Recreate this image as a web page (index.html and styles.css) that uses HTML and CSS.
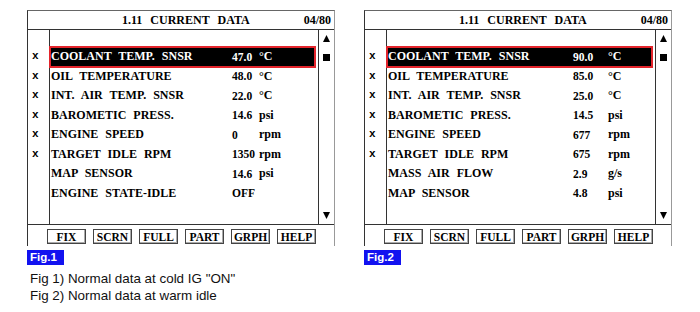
FILE: index.html
```html
<!DOCTYPE html>
<html lang="en">
<head>
    <meta charset="UTF-8">
    <title>Current Data - Normal Values</title>
    <link rel="stylesheet" href="styles.css">
</head>
<body>
    <div class="figures">
        <section class="panel">
            <div class="screen">
                <div class="screen-head">
                    <span class="title">1.11 CURRENT DATA</span>
                    <span class="page">04/80</span>
                </div>
                <div class="screen-body">
                    <div class="marks">
                        <span class="mark">x</span>
                        <span class="mark">x</span>
                        <span class="mark">x</span>
                        <span class="mark">x</span>
                        <span class="mark">x</span>
                        <span class="mark">x</span>
                    </div>
                    <ul class="data">
                        <li class="row row-selected"><span>COOLANT TEMP. SNSR</span><span class="val">47.0</span><span>°C</span></li>
                        <li class="row"><span>OIL TEMPERATURE</span><span class="val">48.0</span><span>°C</span></li>
                        <li class="row"><span>INT. AIR TEMP. SNSR</span><span class="val">22.0</span><span>°C</span></li>
                        <li class="row"><span>BAROMETIC PRESS.</span><span class="val">14.6</span><span>psi</span></li>
                        <li class="row"><span>ENGINE SPEED</span><span class="val">0</span><span>rpm</span></li>
                        <li class="row"><span>TARGET IDLE RPM</span><span class="val">1350</span><span>rpm</span></li>
                        <li class="row"><span>MAP SENSOR</span><span class="val">14.6</span><span>psi</span></li>
                        <li class="row"><span>ENGINE STATE-IDLE</span><span class="val">OFF</span><span></span></li>
                    </ul>
                    <div class="scroll">
                        <svg class="arrow-up" width="7" height="7" viewBox="0 0 7 7"><path d="M3.5 0 L7 7 L0 7 Z"/></svg>
                        <svg class="thumb" width="7" height="7" viewBox="0 0 7 7"><rect width="7" height="7"/></svg>
                        <svg class="arrow-down" width="7" height="7" viewBox="0 0 7 7"><path d="M0 0 L7 0 L3.5 7 Z"/></svg>
                    </div>
                </div>
                <div class="keys">
                    <span class="key">FIX</span>
                    <span class="key">SCRN</span>
                    <span class="key">FULL</span>
                    <span class="key">PART</span>
                    <span class="key">GRPH</span>
                    <span class="key">HELP</span>
                </div>
            </div>
            <div class="fig-tag">Fig.1</div>
        </section>

        <section class="panel panel-warm">
            <div class="screen">
                <div class="screen-head">
                    <span class="title">1.11 CURRENT DATA</span>
                    <span class="page">04/80</span>
                </div>
                <div class="screen-body">
                    <div class="marks">
                        <span class="mark">x</span>
                        <span class="mark">x</span>
                        <span class="mark">x</span>
                        <span class="mark">x</span>
                        <span class="mark">x</span>
                        <span class="mark">x</span>
                    </div>
                    <ul class="data">
                        <li class="row row-selected"><span>COOLANT TEMP. SNSR</span><span class="val">90.0</span><span>°C</span></li>
                        <li class="row"><span>OIL TEMPERATURE</span><span class="val">85.0</span><span>°C</span></li>
                        <li class="row"><span>INT. AIR TEMP. SNSR</span><span class="val">25.0</span><span>°C</span></li>
                        <li class="row"><span>BAROMETIC PRESS.</span><span class="val">14.5</span><span>psi</span></li>
                        <li class="row"><span>ENGINE SPEED</span><span class="val">677</span><span>rpm</span></li>
                        <li class="row"><span>TARGET IDLE RPM</span><span class="val">675</span><span>rpm</span></li>
                        <li class="row"><span>MASS AIR FLOW</span><span class="val">2.9</span><span>g/s</span></li>
                        <li class="row"><span>MAP SENSOR</span><span class="val">4.8</span><span>psi</span></li>
                    </ul>
                    <div class="scroll">
                        <svg class="arrow-up" width="7" height="7" viewBox="0 0 7 7"><path d="M3.5 0 L7 7 L0 7 Z"/></svg>
                        <svg class="thumb" width="7" height="7" viewBox="0 0 7 7"><rect width="7" height="7"/></svg>
                        <svg class="arrow-down" width="7" height="7" viewBox="0 0 7 7"><path d="M0 0 L7 0 L3.5 7 Z"/></svg>
                    </div>
                </div>
                <div class="keys">
                    <span class="key">FIX</span>
                    <span class="key">SCRN</span>
                    <span class="key">FULL</span>
                    <span class="key">PART</span>
                    <span class="key">GRPH</span>
                    <span class="key">HELP</span>
                </div>
            </div>
            <div class="fig-tag">Fig.2</div>
        </section>
    </div>

    <div class="notes">
        <p>Fig 1) Normal data at cold IG "ON"</p>
        <p>Fig 2) Normal data at warm idle</p>
    </div>
</body>
</html>
```

FILE: styles.css
```css
:root {
    --line: #333;
    --line-soft: #999;
    --select-red: #e3242b;
    --tag-blue: #1212f0;
}

* {
    box-sizing: border-box;
}

body {
    margin: 0;
    padding: 10px 0 0 27px;
    font-family: "Liberation Sans", Arial, sans-serif;
    background: #fff;
    color: #111;
}

.figures {
    display: flex;
    gap: 29px;
}

.panel {
    width: 308px;
}

.screen {
    border: 1px solid var(--line);
    border-bottom: 0;
    border-top-color: #666;
    border-right-color: var(--line-soft);
    font-family: "Liberation Serif", "Times New Roman", serif;
    font-weight: bold;
    font-size: 12px;
    color: #000;
}

.screen-head {
    height: 19px;
    display: flex;
    align-items: center;
    padding-left: 94px;
    border-bottom: 1px solid var(--line);
}

.title {
    word-spacing: 5px;
}

.page {
    margin-left: auto;
    margin-right: 3px;
}

.screen-body {
    display: grid;
    grid-template-columns: 22px 268px 16px;
    height: 195px;
    border-bottom: 1px solid var(--line);
}

.marks {
    display: flex;
    flex-direction: column;
    padding: 17px 0 0 4px;
    border-right: 1px solid var(--line);
}

.mark {
    height: 19.5px;
    line-height: 19px;
    font-family: "Liberation Mono", monospace;
    font-size: 11px;
}

.data {
    list-style: none;
    margin: 0;
    padding: 17px 0 0;
}

.row {
    height: 19.5px;
    display: grid;
    grid-template-columns: 181px 27px 1fr;
    align-items: center;
    padding-left: 1px;
    word-spacing: 4px;
    white-space: nowrap;
}

.val {
    font-size: 11.5px;
}

.panel-warm .row {
    grid-template-columns: 185px 35px 1fr;
}

.row-selected {
    margin-right: 3px;
    background: #000;
    color: #fff;
    outline: 2px solid var(--select-red);
    outline-offset: -1px;
}

.scroll {
    display: flex;
    flex-direction: column;
    align-items: center;
    border-left: 1px solid var(--line);
}

.scroll svg {
    display: block;
    fill: #000;
}

.arrow-up {
    margin-top: 5px;
}

.thumb {
    margin-top: 12px;
}

.arrow-down {
    margin-top: auto;
    margin-bottom: 5px;
}

.keys {
    display: flex;
    gap: 7px;
    height: 21px;
    padding: 4px 0 0 19px;
}

.key {
    width: 39px;
    height: 15px;
    display: flex;
    align-items: center;
    justify-content: center;
    border: 1px solid #444;
    box-shadow: inset -1px -1px 0 #aaa;
    font-size: 11.5px;
}

.fig-tag {
    width: 37px;
    height: 15px;
    margin-top: 4px;
    padding-left: 3px;
    background: var(--tag-blue);
    color: #fff;
    font-weight: bold;
    font-size: 11.5px;
    line-height: 15px;
}

.notes {
    margin-top: 5px;
    padding-left: 3px;
    font-size: 13.4px;
    line-height: 17px;
}

.notes p {
    margin: 0;
}
```
